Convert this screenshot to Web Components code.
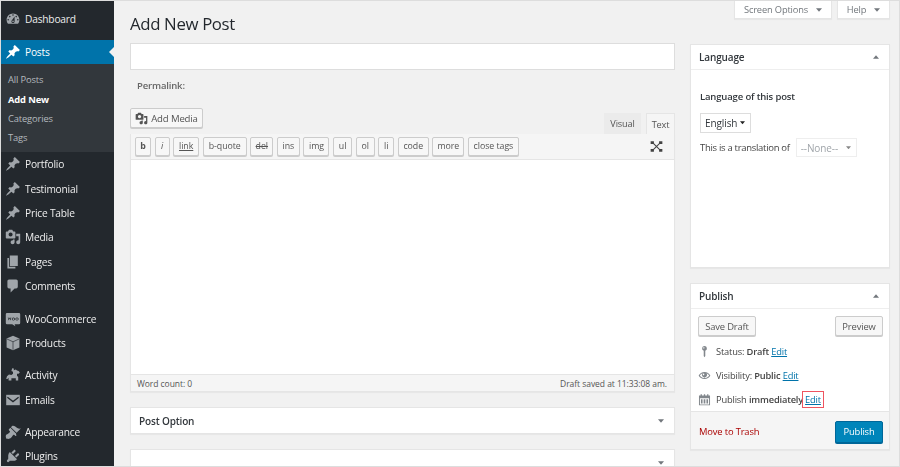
<!DOCTYPE html>
<html lang="en"><head><meta charset="utf-8"><title>Add New Post</title>
<style>
html,body{margin:0;padding:0;height:467px;overflow:hidden;background:#f1f1f1}
body{font:10px "Open Sans","Liberation Sans",sans-serif;letter-spacing:-.15px;color:#444}
</style></head><body>
<wp-app></wp-app>
<script>
const ICONS={
dashboard:'<path d="M3.76 16h12.48c1.1-1.37 1.76-3.11 1.76-5 0-4.42-3.58-8-8-8s-8 3.58-8 8c0 1.89.66 3.63 1.76 5zM10 4c.55 0 1 .45 1 1s-.45 1-1 1-1-.45-1-1 .45-1 1-1zM6 6c.55 0 1 .45 1 1s-.45 1-1 1-1-.45-1-1 .45-1 1-1zm8 0c.55 0 1 .45 1 1s-.45 1-1 1-1-.45-1-1 .45-1 1-1zm-5.37 5.55L12 7v6c0 1.1-.9 2-2 2s-2-.9-2-2c0-.57.24-1.08.63-1.45zM4 10c.55 0 1 .45 1 1s-.45 1-1 1-1-.45-1-1 .45-1 1-1zm12 0c.55 0 1 .45 1 1s-.45 1-1 1-1-.45-1-1 .45-1 1-1zm-5 3c0-.55-.45-1-1-1s-1 .45-1 1 .45 1 1 1 1-.45 1-1z"/>',
pin:'<path d="M10.44 3.02l1.82-1.82 6.36 6.35-1.83 1.82c-1.05-.68-2.48-.57-3.41.36l-.75.75c-.92.93-1.04 2.35-.35 3.41l-1.83 1.82-2.41-2.41-2.8 2.79c-.42.42-3.38 2.71-3.8 2.29s1.86-3.39 2.28-3.81l2.79-2.79L4.1 9.36l1.83-1.82c1.05.69 2.48.57 3.4-.36l.75-.75c.93-.92 1.05-2.35.36-3.41z"/>',
media:'<path d="M13 11V4c0-.55-.45-1-1-1h-1.67L9 1H5L3.67 3H2c-.55 0-1 .45-1 1v7c0 .55.45 1 1 1h10c.55 0 1-.45 1-1zM7 4.5c1.38 0 2.5 1.12 2.5 2.5S8.38 9.5 7 9.5 4.5 8.38 4.5 7 5.62 4.5 7 4.5zM14 6h5v10.5c0 1.38-1.12 2.5-2.5 2.5S14 17.88 14 16.5s1.12-2.5 2.5-2.5c.17 0 .34.02.5.05V9h-3V6zm-4 8.05V13h2v3.5c0 1.38-1.12 2.5-2.5 2.5S7 17.88 7 16.5 8.12 14 9.5 14c.17 0 .34.02.5.05z"/>',
pages:'<path d="M6 15V2h10v13H6zm-1 1h8v2H3V5h2v11z"/>',
comments:'<path d="M5 2h9c1.1 0 2 .9 2 2v7c0 1.1-.9 2-2 2h-2l-5 5v-5H5c-1.1 0-2-.9-2-2V4c0-1.1.9-2 2-2z"/>',
woo:'<path fill-rule="evenodd" d="M2.5 2.500h15A1.500 1.500 0 0 1 19 4v11a1.500 1.500 0 0 1-1.500 1.500H12l1 2.500-4-2.500H2.500A1.500 1.500 0 0 1 1 15V4a1.500 1.500 0 0 1 1.500-1.500zM3.500 8l1 4 1.200-2.600L6.900 12l1-4H7l-.5 2-.8-2h-.1l-.8 2-.5-2zM10.500 8a2 2 0 1 0 .01 0zm0 1a1 1 0 1 1-.01 0zM15 8a2 2 0 1 0 .01 0zm0 1a1 1 0 1 1-.01 0z"/>',
products:'<path d="M10 1l8 3.500v11L10 19l-8-3.500v-11z"/><path d="M2.500 5L10 8.500 17.500 5M10 8.500v10" fill="none" stroke="#23282d" stroke-width=".8"/>',
activity:'<path d="M9 1.500l2 .5v2l2.500-1 1.500 1.500L17 5l1.500 2-1.500 1.500H15V11l1.500 1.500V17h-3v-3H8v3H4.500v-3.500L3 15H1.500l1-3.500L5 9.500l3 .5 2-1.500V6L8 5z"/>',
email:'<path d="M1.500 3.500h17v13h-17z"/><path d="M3 6.500l7 5.500 7-5.500" fill="none" stroke="#23282d" stroke-width="1.600"/>',
appearance:'<path d="M14.48 11.06L7.41 3.99l1.5-1.5c.5-.56 2.3-.47 3.51.32 1.21.8 1.43 1.28 2.91 2.1 1.18.64 2.45 1.26 4.45.85zm-.71.71L6.7 4.7 4.93 6.47c-.39.39-.39 1.02 0 1.41l1.06 1.06c.39.39.39 1.03 0 1.42-.6.6-1.43 1.11-2.21 1.69-.35.26-.7.53-1.01.84C1.43 13.23.99 14.36 1 15.680c.01.31.05.64.1.95.08.51.39 1.54.39 1.54s1.04.31 1.55.39c.31.05.64.09.95.1 1.32.01 2.45-.43 3.79-1.77.31-.31.58-.66.84-1.01.58-.78 1.09-1.61 1.69-2.21.39-.39 1.03-.39 1.42 0l1.06 1.06c.39.39 1.02.39 1.41 0z"/>',
plugins:'<path d="M13.11 4.36L9.87 7.6 8 5.73l3.24-3.24c.35-.34 1.05-.2 1.56.32.52.51.66 1.21.31 1.55zm-8 1.77l.91-1.12 9.01 9.01-1.19.84c-.71.71-2.63 1.16-3.82 1.16H6.14L4.9 17.26c-.59.59-1.54.59-2.12 0-.59-.58-.59-1.53 0-2.12l1.24-1.24v-3.88c0-1.13.4-3.19 1.09-3.89zm7.26 3.97l3.24-3.24c.34-.35 1.04-.21 1.55.31.52.51.66 1.21.31 1.55l-3.24 3.25z"/>',
location:'<path d="M10 1.500a3.700 3.700 0 0 1 1.200 7.200V17l-1.200 2-1.200-2V8.700A3.700 3.700 0 0 1 10 1.500zM9 3.500a1 1 0 1 0 .01 0z" fill-rule="evenodd"/>',
eye:'<path fill-rule="evenodd" d="M10 4.500c4 0 7.500 2.500 9 5.500-1.500 3-5 5.500-9 5.500S2.500 13 1 10c1.500-3 5-5.500 9-5.500zM2.800 10c1.400 2.200 4 4 7.200 4s5.800-1.800 7.200-4c-.9-1.400-2.300-2.600-4-3.300a4 4 0 1 1-6.400 0c-1.700.7-3.100 1.900-4 3.300zM8.500 7a1.200 1.200 0 1 0 .01 0z"/>',
calendar:'<path fill-rule="evenodd" d="M1.500 4H4V2h2v2h3V2h2v2h3V2h2v2h2.500v15h-17zM3 8v9.500h14V8zM4.500 9.500H7V16H4.500zM8.700 9.500h2.600V16H8.700zM13 9.500h2.500V16H13z"/>',
fullscreen:'<path d="M1 2h5v4H1zM14 2h5v4h-5zM1 14h5v4H1zM14 14h5v4h-5z"/><path d="M4 4l12 12M16 4L4 16" stroke="currentColor" stroke-width="1.600"/>'
};
ICONS.addmedia=ICONS.media;
const svg=(n,s,c='currentColor')=>`<svg viewBox="0 0 20 20" width="${s}" height="${s}" fill="${c}" aria-hidden="true">${ICONS[n]}</svg>`;
const arrow=(w,h,up,c)=>`<svg viewBox="0 0 10 6" width="${w}" height="${h}" fill="${c}" aria-hidden="true"><path d="${up?'M0 6L5 0l5 6z':'M0 0h10L5 6z'}"/></svg>`;
function def(name,render){customElements.define(name,class extends HTMLElement{
  constructor(){super();this.attachShadow({mode:'open'})}
  connectedCallback(){this.shadowRoot.innerHTML=render(this)}
})}

def('wp-menu-item',el=>{const cur=el.hasAttribute('current');const h=el.getAttribute('h')||'24.4';const mt=el.getAttribute('mt')||'0';
return `<style>:host{display:flex;align-items:center;height:${h}px;margin-top:${mt}px;padding-left:4px;gap:4px;font-size:10.200px;letter-spacing:-.2px;color:#eee;position:relative;${cur?'background:#0073aa;color:#fff;':''}}
svg{flex:none;color:${cur?'#fff':'#a0a5aa'}}
.tri{position:absolute;right:0;top:50%;margin-top:-5px;border:5px solid transparent;border-right-color:#f1f1f1;border-left:0}</style>
${svg(el.getAttribute('icon'),16)}<slot></slot>${cur?'<span class="tri"></span>':''}`});

def('wp-sidebar',()=>`<style>:host{display:block;flex:none;width:113px;height:465px;background:#23282d;overflow:hidden;padding-top:6px;box-sizing:border-box}
.sub{background:#32373c;padding:6px 0 4px;height:88px;box-sizing:border-box;font-size:9.400px;color:#b4b9be;display:flex;flex-direction:column}
.sub span{height:19.400px;display:flex;align-items:center;padding-left:7px}
.sub b{height:19.400px;display:flex;align-items:center;padding-left:7px;color:#fff;font-weight:700}
</style>
<wp-menu-item icon="dashboard">Dashboard</wp-menu-item>
<wp-menu-item icon="pin" current mt="8.600" h="24">Posts</wp-menu-item>
<div class="sub"><span>All Posts</span><b>Add New</b><span>Categories</span><span>Tags</span></div>
<wp-menu-item icon="pin">Portfolio</wp-menu-item>
<wp-menu-item icon="pin">Testimonial</wp-menu-item>
<wp-menu-item icon="pin">Price Table</wp-menu-item>
<wp-menu-item icon="media">Media</wp-menu-item>
<wp-menu-item icon="pages">Pages</wp-menu-item>
<wp-menu-item icon="comments">Comments</wp-menu-item>
<wp-menu-item icon="woo" mt="8">WooCommerce</wp-menu-item>
<wp-menu-item icon="products">Products</wp-menu-item>
<wp-menu-item icon="activity" mt="8">Activity</wp-menu-item>
<wp-menu-item icon="email">Emails</wp-menu-item>
<wp-menu-item icon="appearance" mt="8">Appearance</wp-menu-item>
<wp-menu-item icon="plugins">Plugins</wp-menu-item>`);

def('wp-button',el=>{const p=el.hasAttribute('primary');
return `<style>:host{display:inline-flex;align-items:center;justify-content:center;box-sizing:border-box;width:${el.getAttribute('w')}px;height:${el.getAttribute('h')||20}px;font-size:${el.getAttribute('fs')||9.4}px;gap:3px;border-radius:2px;
${p?'background:#0085ba;border:1px solid #006799;box-shadow:0 1px 0 #006799;color:#fff;':'background:#f7f7f7;border:1px solid #ccc;box-shadow:0 1px 0 #ccc;color:#555;'}}</style><slot></slot>`});

def('wp-qt',el=>`<style>:host{display:inline-flex;align-items:center;justify-content:center;box-sizing:border-box;flex:none;width:${el.getAttribute('w')}px;height:19px;font-size:8.800px;letter-spacing:-.05px;background:#f7f7f7;border:1px solid #ccc;box-shadow:0 1px 0 #ccc;border-radius:2px;color:#555;${el.getAttribute('x')||''}}</style><slot></slot>`);

def('wp-box',el=>{const up=el.hasAttribute('open');
return `<style>:host{display:block;box-sizing:border-box;background:#fff;border:1px solid #e5e5e5;box-shadow:0 1px 1px rgba(0,0,0,.04);height:${el.getAttribute('h')}px;overflow:hidden}
header{display:flex;align-items:center;justify-content:space-between;height:25px;padding:0 10px 0 8px;box-sizing:border-box;font-size:10px;font-weight:600;color:#32373c;${up?'border-bottom:1px solid #eee;':''}}</style>
<header><span><slot name="title"></slot></span>${arrow(6,4,up,'#72777c')}</header><slot></slot>`});

def('wp-editor',()=>`<style>:host{display:block}
.top{display:flex;align-items:flex-end;height:26px;}
.tab{box-sizing:border-box;height:21px;display:flex;align-items:center;justify-content:center;font-size:9.200px;color:#555}
.visual{width:37px;margin-left:auto;background:#ebebeb;margin-right:5px}
.text{width:29px;background:#f5f5f5;border:1px solid #e5e5e5;border-bottom:0}
.am{align-self:flex-start}
.frame{border:1px solid #e5e5e5;border-top:0;box-sizing:border-box;height:258px;background:#fff;display:flex;flex-direction:column;box-shadow:0 1px 1px rgba(0,0,0,.04)}
.tools{height:26px;box-sizing:border-box;background:#f5f5f5;border-bottom:1px solid #e5e5e5;display:flex;align-items:center;gap:3.580px;padding:0 4px 1px 4px}
.fs{margin-left:auto;color:#444;display:flex;margin-right:7px}
.area{flex:1}
.foot{height:17px;box-sizing:border-box;background:#f5f5f5;border-top:1px solid #e5e5e5;display:flex;justify-content:space-between;align-items:center;padding:0 7px 0 6px;font-size:8.500px;letter-spacing:-.05px;color:#555}
</style>
<div class="top"><wp-button class="am" w="73" fs="9.600">${svg('addmedia',13,'#555')}Add Media</wp-button><div class="tab visual">Visual</div><div class="tab text">Text</div></div>
<div class="frame"><div class="tools">
<wp-qt w="16" x="font-weight:700">b</wp-qt><wp-qt w="15" x="font-style:italic">i</wp-qt><wp-qt w="26" x="text-decoration:underline">link</wp-qt><wp-qt w="44">b-quote</wp-qt><wp-qt w="23" x="text-decoration:line-through">del</wp-qt><wp-qt w="23">ins</wp-qt><wp-qt w="26">img</wp-qt><wp-qt w="19">ul</wp-qt><wp-qt w="19">ol</wp-qt><wp-qt w="16">li</wp-qt><wp-qt w="31">code</wp-qt><wp-qt w="32">more</wp-qt><wp-qt w="51">close tags</wp-qt>
<span class="fs">${svg('fullscreen',13)}</span></div>
<div class="area"></div>
<div class="foot"><span>Word count: 0</span><span>Draft saved at 11:33:08 am.</span></div></div>`);

def('wp-select',el=>{const d=el.hasAttribute('disabled');
return `<style>:host{display:inline-flex;align-items:center;justify-content:space-between;box-sizing:border-box;width:${el.getAttribute('w')}px;height:${el.getAttribute('h')}px;border:1px solid ${d?'#eee':'#ddd'};padding:0 5px 0 4px;font-size:10px;letter-spacing:-.1px;background:#fff;color:${d?'#a0a5aa':'#32373c'}}</style><slot></slot>${arrow(5,3.500,false,d?'#888':'#222')}`});

def('wp-pubrow',el=>`<style>:host{display:flex;align-items:center;gap:5px;height:24px;padding-left:7px;font-size:9.300px;letter-spacing:-.17px;color:#444}
svg{flex:none;color:#82878c}</style>${svg(el.getAttribute('icon'),13)}<span><slot></slot></span>`);

def('wp-tab',el=>`<style>:host{display:inline-flex;align-items:center;justify-content:center;gap:8px;box-sizing:border-box;width:${el.getAttribute('w')}px;height:18px;background:#fff;border:1px solid #e5e5e5;border-top:0;box-shadow:0 1px 1px rgba(0,0,0,.04);font-size:9.300px;color:#72777c}</style><slot></slot>${arrow(6,4,false,'#72777c')}`);

def('wp-app',()=>`<style>:host{display:flex;width:900px;height:467px;box-sizing:border-box;border:1px solid #ddd;overflow:hidden;filter:blur(.25px)}
main{flex:1;display:flex;flex-direction:column;padding:0 9px 0 16px;min-width:0}
.tabs{display:flex;justify-content:flex-end;gap:5px}
.cols{display:flex;gap:15px;flex:1;margin-top:-18px}
.left{width:545px;flex:none}
.right{width:200px;flex:none;padding-top:43px}
h1{margin:0;font-size:16.800px;letter-spacing:-.35px;font-weight:400;line-height:24px;color:#23282d;padding-top:11px;height:42px;box-sizing:border-box}
.title{height:27px;box-sizing:border-box;background:#fff;border:1px solid #ddd;}
.perma{height:38px;display:flex;align-items:center;padding-left:7px;font-size:9.500px;font-weight:600;color:#666;box-sizing:border-box;padding-bottom:7px}
a{color:#0073aa;text-decoration:underline}
.lang{padding:0 9px;font-size:9.500px;color:#32373c}
.lang p{margin:20px 0 9px;font-weight:600;line-height:14px}
.tr{display:flex;align-items:center;gap:6px;margin-top:5px;color:#444;letter-spacing:-.3px}
.pub{display:flex;justify-content:space-between;padding:7px 6px 3px 7px}
.rows{display:flex;flex-direction:column}
.foot{height:38px;background:#f5f5f5;border-top:1px solid #e5e5e5;display:flex;align-items:center;justify-content:space-between;padding:2px 6px 0 8px;box-sizing:border-box}
.trash{color:#a00;font-size:9.400px}
b{font-weight:600}
.mark{display:inline-block;line-height:15px;border:1px solid #ee5560;padding:0 2px;margin-left:-1px}
.sp{height:15px;flex:none}
</style>
<wp-sidebar></wp-sidebar>
<main>
<div class="tabs"><wp-tab w="98">Screen Options</wp-tab><wp-tab w="53">Help</wp-tab></div>
<div class="cols">
<div class="left">
<h1>Add New Post</h1>
<div class="title"></div>
<div class="perma">Permalink:</div>
<wp-editor></wp-editor>
<div class="sp"></div>
<wp-box h="27"><span slot="title">Post Option</span></wp-box>
<div class="sp"></div>
<wp-box h="40"></wp-box>
</div>
<div class="right">
<wp-box open h="224"><span slot="title">Language</span>
<div class="lang"><p>Language of this post</p>
<wp-select w="51" h="20">English</wp-select>
<div class="tr">This is a translation of <wp-select disabled w="61" h="19">--None--</wp-select></div></div></wp-box>
<div class="sp"></div>
<wp-box open h="167"><span slot="title">Publish</span>
<div class="pub"><wp-button w="58">Save Draft</wp-button><wp-button w="48">Preview</wp-button></div>
<div class="rows">
<wp-pubrow icon="location">Status: <b>Draft</b> <a>Edit</a></wp-pubrow>
<wp-pubrow icon="eye">Visibility: <b>Public</b> <a>Edit</a></wp-pubrow>
<wp-pubrow icon="calendar">Publish <b>immediately</b><a class="mark">Edit</a></wp-pubrow>
</div>
<div class="foot"><span class="trash">Move to Trash</span><wp-button primary w="48" h="22">Publish</wp-button></div>
</wp-box>
</div>
</div>
</main>`);
</script>
</body></html>
